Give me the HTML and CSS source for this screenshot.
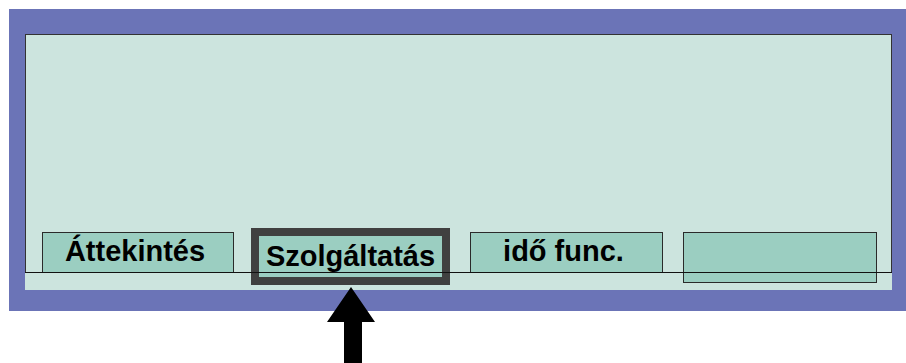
FILE: index.html
```html
<!DOCTYPE html>
<html lang="hu">
<head>
    <meta charset="UTF-8">
    <meta name="viewport" content="width=device-width, initial-scale=1.0">
    <title>Szolgáltatás</title>
    <link rel="stylesheet" href="styles.css">
</head>
<body>

<div class="frame">
    <div class="panel">
        <div class="tabbox">
            <div class="tab tab-first">Áttekintés</div>
            <div class="tab tab-active">Szolgáltatás</div>
            <div class="tab tab-third">idő func.</div>
            <div class="tab tab-empty"></div>
        </div>
    </div>
</div>

<svg class="pointer" width="48" height="76" viewBox="0 0 48 76">
    <polygon points="24,0 48,35 35,35 35,76 17,76 17,35 0,35" fill="#000"/>
</svg>

</body>
</html>
```

FILE: styles.css
```css
body {
    margin: 0;
    background-color: #fff;
    font-family: "Liberation Sans", Arial, sans-serif;
}
.frame {
    margin: 9px 0 0 9px;
    height: 302px;
    box-sizing: border-box;
    padding: 25px 14px 21px 16px;
    background-color: #6b74b7;
}
.panel {
    height: 256px;
    background-color: #cce4de;
}
.tabbox {
    position: relative;
    height: 239px;
    box-sizing: border-box;
    border: 1px solid #333;
    border-bottom: none;
    display: flex;
    align-items: flex-start;
    padding: 197px 0 0 16px;
}
.tabbox::after {
    content: "";
    position: absolute;
    left: -1px;
    right: -1px;
    bottom: 0;
    height: 1px;
    background-color: #111;
}
.tab {
    box-sizing: border-box;
    height: 41px;
    border: 1px solid #2a2a2a;
    background-color: #9bcec1;
    font-size: 29px;
    font-weight: bold;
    color: #000;
    line-height: 37px;
    text-align: center;
    padding-right: 6px;
}
.tab-first {
    width: 192px;
}
.tab-active {
    width: 199px;
    height: 57px;
    margin: -4px 0 0 17px;
    border: 8px solid #404040;
    line-height: 41px;
    padding-right: 0;
}
.tab-third {
    width: 193px;
    margin-left: 20px;
}
.tab-empty {
    width: 194px;
    height: 51px;
    margin-left: 20px;
}
.pointer {
    position: absolute;
    left: 327px;
    top: 287px;
}
```
